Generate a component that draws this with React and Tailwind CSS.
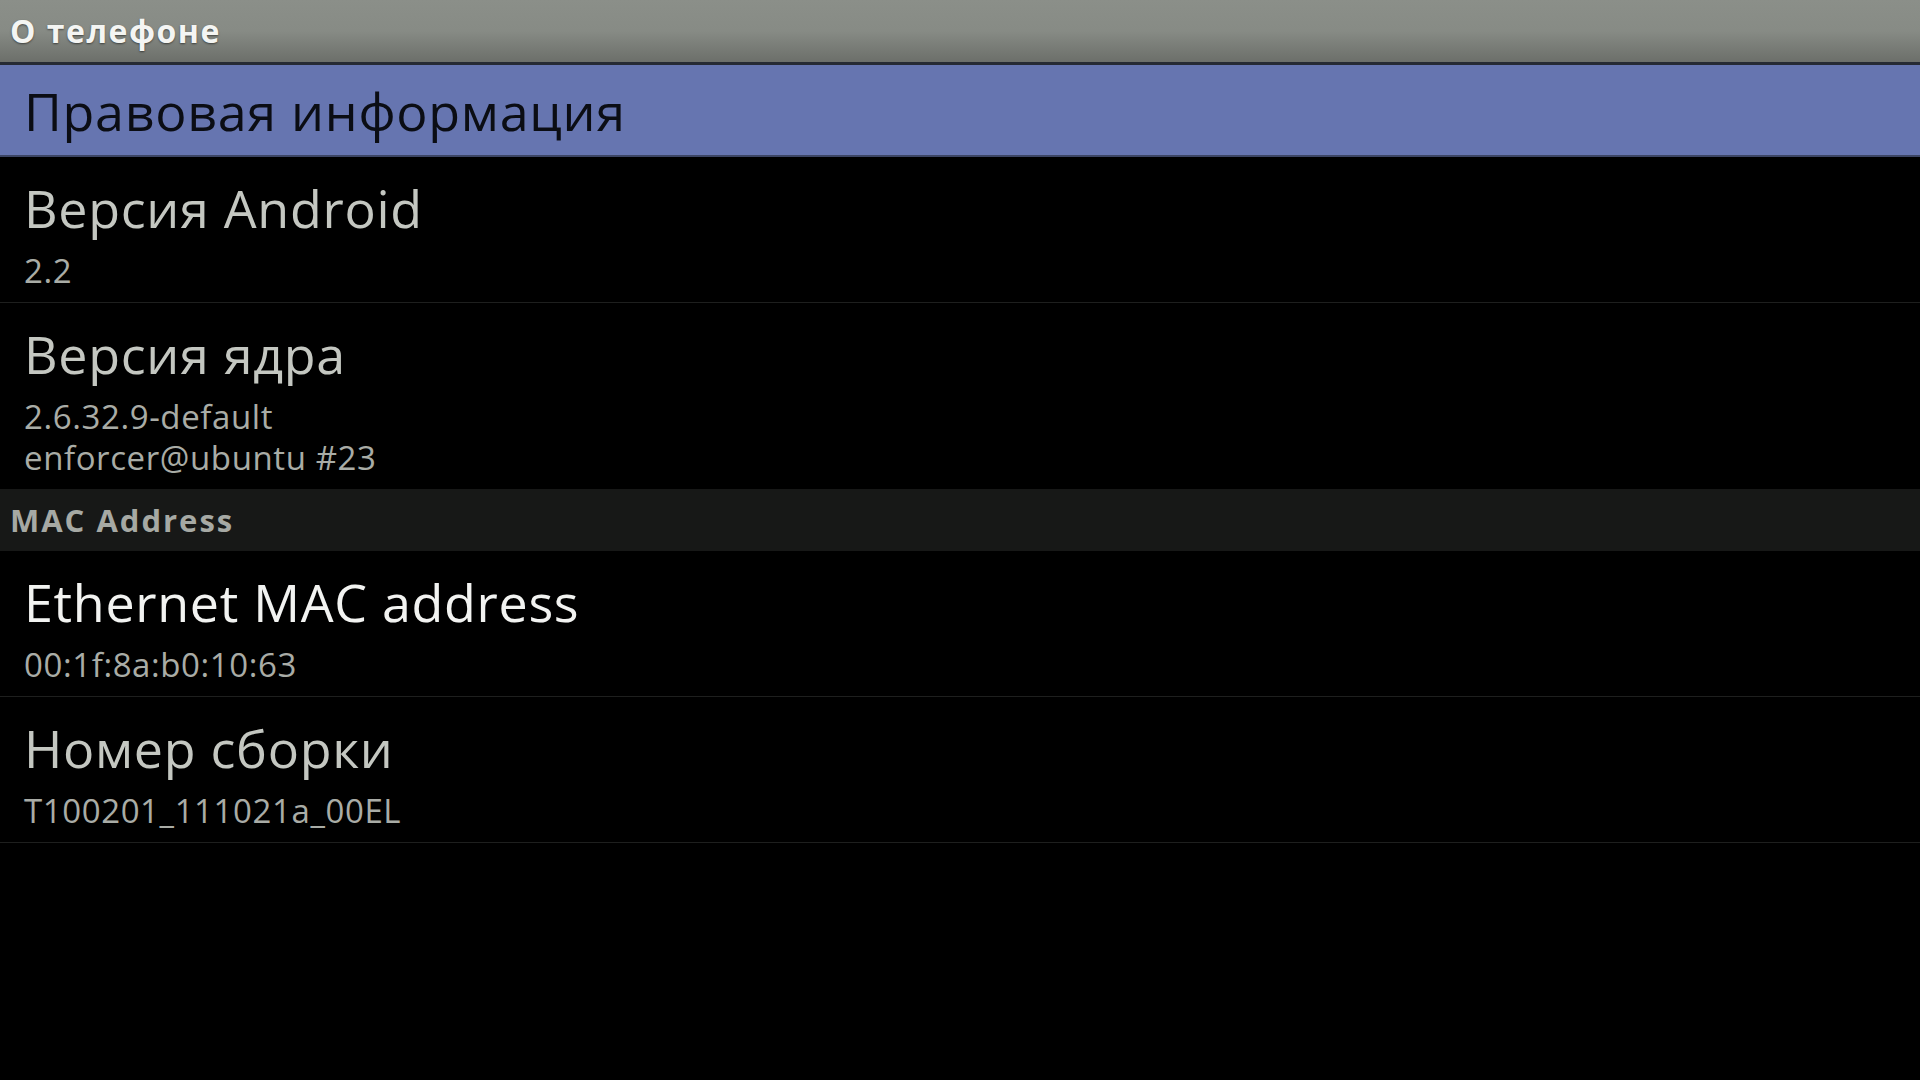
const font = { fontFamily: '"Open Sans", "Noto Sans", sans-serif' };

const items = [
    { title: "Версия Android", summary: ["2.2"], divider: true },
    { title: "Версия ядра", summary: ["2.6.32.9-default", "enforcer@ubuntu #23"], divider: false },
];

const macItems = [
    { title: "Ethernet MAC address", summary: ["00:1f:8a:b0:10:63"], bright: true, divider: true },
    { title: "Номер сборки", summary: ["T100201_111021a_00EL"], divider: true },
];

const Row = ({ title, summary, bright, divider }) => (
    <div className={`pl-6 pt-[9px] pb-[11px] ${divider ? "border-b border-[#1e1f1e]" : ""}`}>
        <div className={`text-[52px] leading-[84px] tracking-[0.7px] ${bright ? "text-[#f2f3f1]" : "text-[#c4c7c1]"}`}>
            {title}
        </div>
        {summary.map((line) => (
            <div key={line} className="text-[33px] leading-[41px] tracking-[0.6px] text-[#a9aca6]">
                {line}
            </div>
        ))}
    </div>
);

export default function App() {
    return (
        <div className="w-[1920px] h-[1080px] bg-black overflow-hidden" style={font}>
            <div className="h-[62px] bg-gradient-to-b from-[#8b8f89] via-[#878b85] to-[#6c6f6a] flex items-center px-[10px]">
                <span className="text-[32px] font-bold tracking-[1.5px] text-[#f4f5f3] leading-[62px] [text-shadow:0_1px_2px_rgba(0,0,0,0.5)]">
                    О телефоне
                </span>
            </div>
            <div className="h-[3px] bg-[#262a33]" />
            <div className="h-[92px] bg-[#6675b0] border-b-2 border-[#3c4564] flex items-center pl-6">
                <span className="text-[52px] leading-[92px] tracking-[0.7px] text-[#0b0d14] pt-[2px]">Правовая информация</span>
            </div>
            {items.map((item) => (
                <Row key={item.title} {...item} />
            ))}
            <div className="h-[62px] bg-[#171817] flex items-center px-[10px]">
                <span className="text-[31px] font-bold tracking-[2px] text-[#a6a9a4] leading-[62px]">MAC Address</span>
            </div>
            {macItems.map((item) => (
                <Row key={item.title} {...item} />
            ))}
        </div>
    );
}
